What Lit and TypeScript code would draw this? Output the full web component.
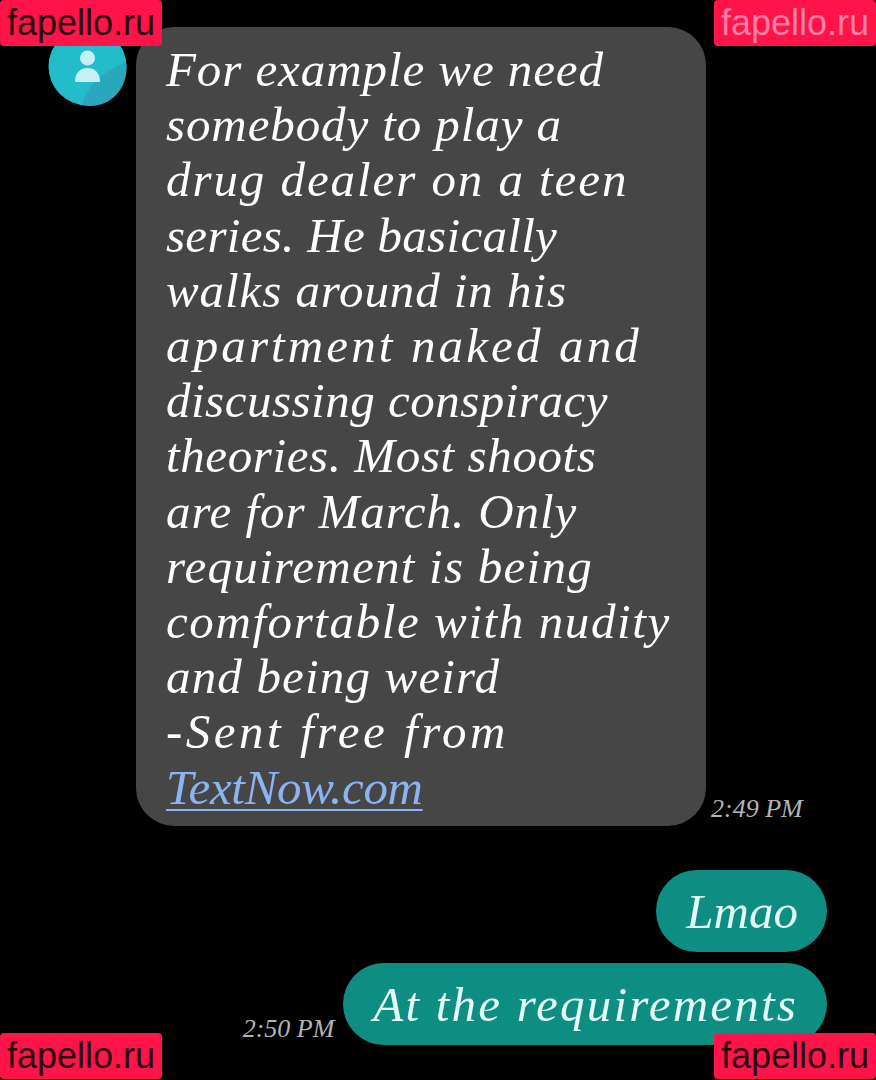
import { LitElement, html, css } from "lit";
import { customElement } from "lit/decorators.js";

const LINES: [string, number][] = [
  ["For example we need", 0.92],
  ["somebody to play a", 0.9],
  ["drug dealer on a teen", 1.93],
  ["series. He basically", 0.3],
  ["walks around in his", 0.92],
  ["apartment naked and", 3.13],
  ["discussing conspiracy", 0.5],
  ["theories. Most shoots", 0.6],
  ["are for March. Only", 0.92],
  ["requirement is being", 1.25],
  ["comfortable with nudity", 1.59],
  ["and being weird", 1.17],
  ["-Sent free from", 3.5],
];

@customElement("app-root")
export class AppRoot extends LitElement {
  static styles = css`
    :host {
      display: block;
      position: relative;
      width: 876px;
      height: 1080px;
      overflow: hidden;
      background: #000;
      color: #fff;
      font-family: "Liberation Serif", "DejaVu Serif", serif;
      font-style: italic;
    }
    .thread {
      box-sizing: border-box;
      height: 1080px;
      padding: 27px 49px 0 48px;
      display: flex;
      flex-direction: column;
    }
    .incoming {
      display: flex;
      align-items: flex-end;
    }
    .avatar {
      align-self: flex-start;
      width: 79px;
      height: 79px;
      margin-right: 9px;
      flex: none;
    }
    .bubble-in {
      box-sizing: border-box;
      width: 570px;
      height: 799px;
      padding: 15px 20px 0 30px;
      background: #464646;
      border-radius: 38px;
      font-size: 49px;
      line-height: 55.2px;
      white-space: nowrap;
    }
    .bubble-in span { display: block; }
    .bubble-in a {
      display: block;
      width: max-content;
      color: #8db4f0;
      letter-spacing: -0.3px;
      text-decoration: underline;
      text-decoration-thickness: 2px;
      text-underline-offset: 5px;
    }
    .time {
      font-size: 26px;
      line-height: 30px;
      color: #b4b4b4;
      white-space: nowrap;
    }
    .time-in { margin: 0 0 2px 5px; }
    .outgoing {
      display: flex;
      flex-direction: column;
      align-items: flex-end;
      gap: 11px;
      margin-top: 44px;
    }
    .row {
      display: flex;
      align-items: flex-end;
      gap: 9px;
    }
    .bubble-out {
      box-sizing: border-box;
      height: 82px;
      display: flex;
      align-items: center;
      padding: 0 29px 0 30px;
      background: #0e8e82;
      border-radius: 41px;
      color: #e4fbf8;
      font-size: 49px;
      white-space: nowrap;
    }
    .short { letter-spacing: 0; }
    .long { letter-spacing: 2.2px; }
    .time-out { margin-bottom: 1px; }
    .mark {
      position: absolute;
      box-sizing: border-box;
      width: 162px;
      height: 46px;
      display: flex;
      align-items: center;
      justify-content: center;
      background: #fe1449;
      border-radius: 4px;
      font-family: "Liberation Sans", Arial, sans-serif;
      font-style: normal;
      font-size: 36px;
      line-height: 46px;
      color: #2a0810;
    }
    .tl { left: 0; top: 0; }
    .tr { right: 0; top: 0; color: #f77ea6; }
    .bl { left: 0; bottom: 1px; }
    .br { right: 0; bottom: 1px; }
  `;

  render() {
    return html`
      <div class="thread">
        <div class="incoming">
          <svg class="avatar" viewBox="0 0 79 79" aria-hidden="true">
            <circle cx="39.5" cy="39.5" r="39" fill="#22bccb" />
            <path d="M78 35C56 44 39 58 34 78C60 84 82 62 78 35Z" fill="#2ba7bd" />
            <circle cx="39.5" cy="31" r="7.5" fill="#c6f0f6" />
            <path d="M27 55C27 45 33 41 39.5 41S52 45 52 55Z" fill="#c6f0f6" />
          </svg>
          <div class="bubble-in">
            ${LINES.map(
              ([text, spacing]) =>
                html`<span style="letter-spacing:${spacing}px">${text}</span>`
            )}
            <a>TextNow.com</a>
          </div>
          <div class="time time-in">2:49 PM</div>
        </div>
        <div class="outgoing">
          <div class="bubble-out short">Lmao</div>
          <div class="row">
            <div class="time time-out">2:50 PM</div>
            <div class="bubble-out long">At the requirements</div>
          </div>
        </div>
      </div>
      <div class="mark tl">fapello.ru</div>
      <div class="mark tr">fapello.ru</div>
      <div class="mark bl">fapello.ru</div>
      <div class="mark br">fapello.ru</div>
    `;
  }
}
